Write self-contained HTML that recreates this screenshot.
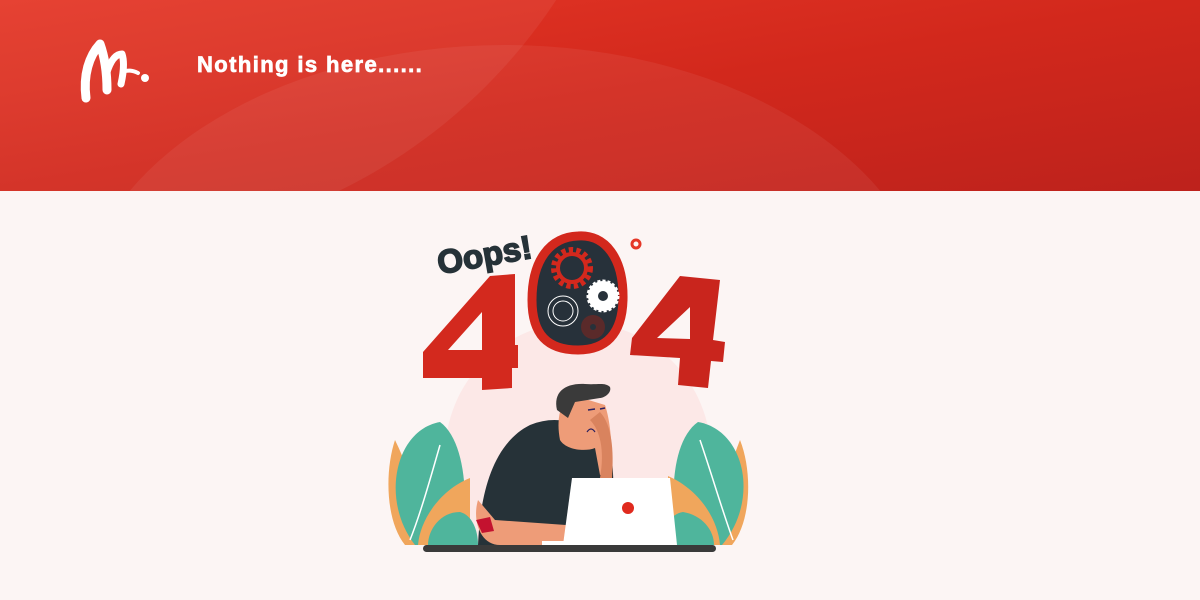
<!DOCTYPE html>
<html><head><meta charset="utf-8"><style>
html,body{margin:0;padding:0}
body{width:1200px;height:600px;overflow:hidden;background:#fcf5f4;position:relative;font-family:"Liberation Sans",sans-serif}
</style></head><body>
<svg width="1200" height="600" viewBox="0 0 1200 600" style="position:absolute;left:0;top:0">
<defs>
<linearGradient id="hg" x1="0" y1="0" x2="1" y2="1">
<stop offset="0" stop-color="#e53727"/><stop offset="0.5" stop-color="#d2281c"/><stop offset="1" stop-color="#bd221c"/>
</linearGradient>
<clipPath id="hc"><rect x="0" y="0" width="1200" height="191"/></clipPath>
<clipPath id="dc"><rect x="0" y="0" width="1200" height="545"/></clipPath>
</defs>
<rect x="0" y="0" width="1200" height="191" fill="url(#hg)"/>
<g clip-path="url(#hc)">
<circle cx="100" cy="-300" r="546" fill="#fff" opacity="0.06"/>
<ellipse cx="505" cy="330" rx="430" ry="285" fill="#fff" opacity="0.06"/>
</g>
<!-- logo -->
<g fill="none" stroke="#fff" stroke-linecap="round" stroke-linejoin="round">
<path d="M86 98 C83 75 89 56 100 44 C105 58 107 75 107 90" stroke-width="9"/>
<path d="M107 72 C111 60 116 54 122 54 C125 63 123 75 121 84" stroke-width="7"/>
<path d="M122 72 C128 70 132 70 138 73" stroke-width="4"/>
</g>
<circle cx="145" cy="78" r="4" fill="#fff"/>
<text x="197" y="72" fill="#fff" stroke="#fff" stroke-width="0.7" font-size="22" font-weight="bold" letter-spacing="1.4">Nothing is here......</text>

<!-- pink circle -->
<g clip-path="url(#dc)"><circle cx="578" cy="455" r="133" fill="#fce8e7"/></g>

<!-- Oops -->
<text x="436" y="266" font-size="33" font-weight="bold" fill="#263238" stroke="#263238" stroke-width="1.6" transform="rotate(-10 485 250)">Oops!</text>
<!-- 4s -->
<path fill-rule="evenodd" fill="#d3291e" d="M423 352 L490 276 L515 274 L515 345 L518 345 L518 368 L512 368 L512 388 L482 390 L482 378 L423 378 Z M448 350 L482 312 L482 350 Z"/>
<path fill-rule="evenodd" fill="#c9251d" d="M632 338 L680 276 L720 280 L713 340 L725 342 L723 362 L711 361 L708 388 L678 385 L680 358 L630 355 Z M657 338 L690 307 L690 339 Z"/>
<!-- 0 -->
<path d="M578 236 C605 234 624 258 623 300 C622 335 605 350 578 350 C548 350 532 335 532 300 C532 260 550 237 578 236 Z" fill="#27313a" stroke="#d3281d" stroke-width="9"/>
<circle cx="572" cy="268" r="17" fill="none" stroke="#d3281d" stroke-width="8" stroke-dasharray="4 3"/>
<circle cx="572" cy="268" r="14" fill="none" stroke="#d3281d" stroke-width="4"/>
<circle cx="603" cy="296" r="15" fill="#fff" stroke="#fff" stroke-width="3" stroke-dasharray="3 2"/>
<circle cx="603" cy="296" r="5" fill="#27313a"/>
<circle cx="563" cy="311" r="15" fill="none" stroke="#fff" stroke-width="1"/>
<circle cx="563" cy="311" r="10" fill="none" stroke="#fff" stroke-width="1"/>
<circle cx="593" cy="327" r="12" fill="#5a2a2a"/>
<circle cx="593" cy="327" r="3" fill="#27313a"/>
<circle cx="636" cy="244" r="4" fill="none" stroke="#e53727" stroke-width="3"/>

<!-- leaves left -->
<path d="M395 440 C385 470 385 520 405 545 L430 545 C420 510 410 470 395 440Z" fill="#f0a65c"/>
<path d="M440 422 C395 430 380 500 415 545 L460 545 C470 500 465 440 440 422Z" fill="#4fb59c"/>
<path d="M440 445 C430 480 420 515 410 540" stroke="#fff" stroke-width="1.5" fill="none"/>
<path d="M470 478 C440 490 420 520 418 545 L470 545 Z" fill="#f0a65c"/>
<path d="M460 512 C440 512 428 530 428 545 L478 545 C478 530 472 515 460 512Z" fill="#4fb59c"/>
<!-- leaves right -->
<path d="M740 440 C752 470 752 520 732 545 L710 545 C718 510 728 470 740 440Z" fill="#f0a65c"/>
<path d="M698 422 C745 430 760 500 722 545 L680 545 C668 500 672 440 698 422Z" fill="#4fb59c"/>
<path d="M700 440 C712 475 722 510 733 540" stroke="#fff" stroke-width="1.5" fill="none"/>
<path d="M668 476 C700 490 718 520 720 545 L668 545 Z" fill="#f0a65c"/>
<path d="M645 515 C660 525 668 535 672 545 L650 545 Z" fill="#f0a65c"/>
<path d="M683 512 C702 515 714 530 714 545 L662 545 C662 528 670 514 683 512Z" fill="#4fb59c"/>

<!-- person -->
<path d="M478 545 C480 500 490 445 530 425 C555 415 580 420 590 440 L610 445 C615 470 614 520 612 545 Z" fill="#263238"/>
<path d="M478 500 C472 520 480 545 500 545 L565 545 L566 525 L495 520 Z" fill="#ee9c78"/>
<path d="M572 395 C560 400 556 420 560 440 C566 450 585 452 595 448 L600 475 L612 470 C612 440 610 420 605 405 Z" fill="#ee9c78"/>
<path d="M590 420 C600 430 605 450 600 478 L612 478 C614 450 612 425 600 412 Z" fill="#d9835e"/>
<path d="M557 410 C553 392 565 383 585 384 C598 385 605 382 610 387 C612 393 604 398 600 398 L575 402 L568 418 Z" fill="#3a3a3a"/>
<path d="M588 410 l7 -1 M600 409 l5 -1" stroke="#2a2060" stroke-width="1.5"/>
<path d="M587 432 q4 -6 8 0" stroke="#2a2060" stroke-width="1.2" fill="none"/>
<path d="M476 520 l14 -3 l4 14 l-12 2 Z" fill="#c4122f"/>
<!-- laptop -->
<path d="M572 478 L670 478 L677 545 L563 545 Z" fill="#fff"/>
<circle cx="628" cy="508" r="6" fill="#e02a1e"/>
<rect x="542" y="541" width="60" height="4" fill="#fff"/>
<rect x="423" y="545" width="293" height="7" rx="3.5" fill="#3a3a3a"/>
</svg>
</body></html>
